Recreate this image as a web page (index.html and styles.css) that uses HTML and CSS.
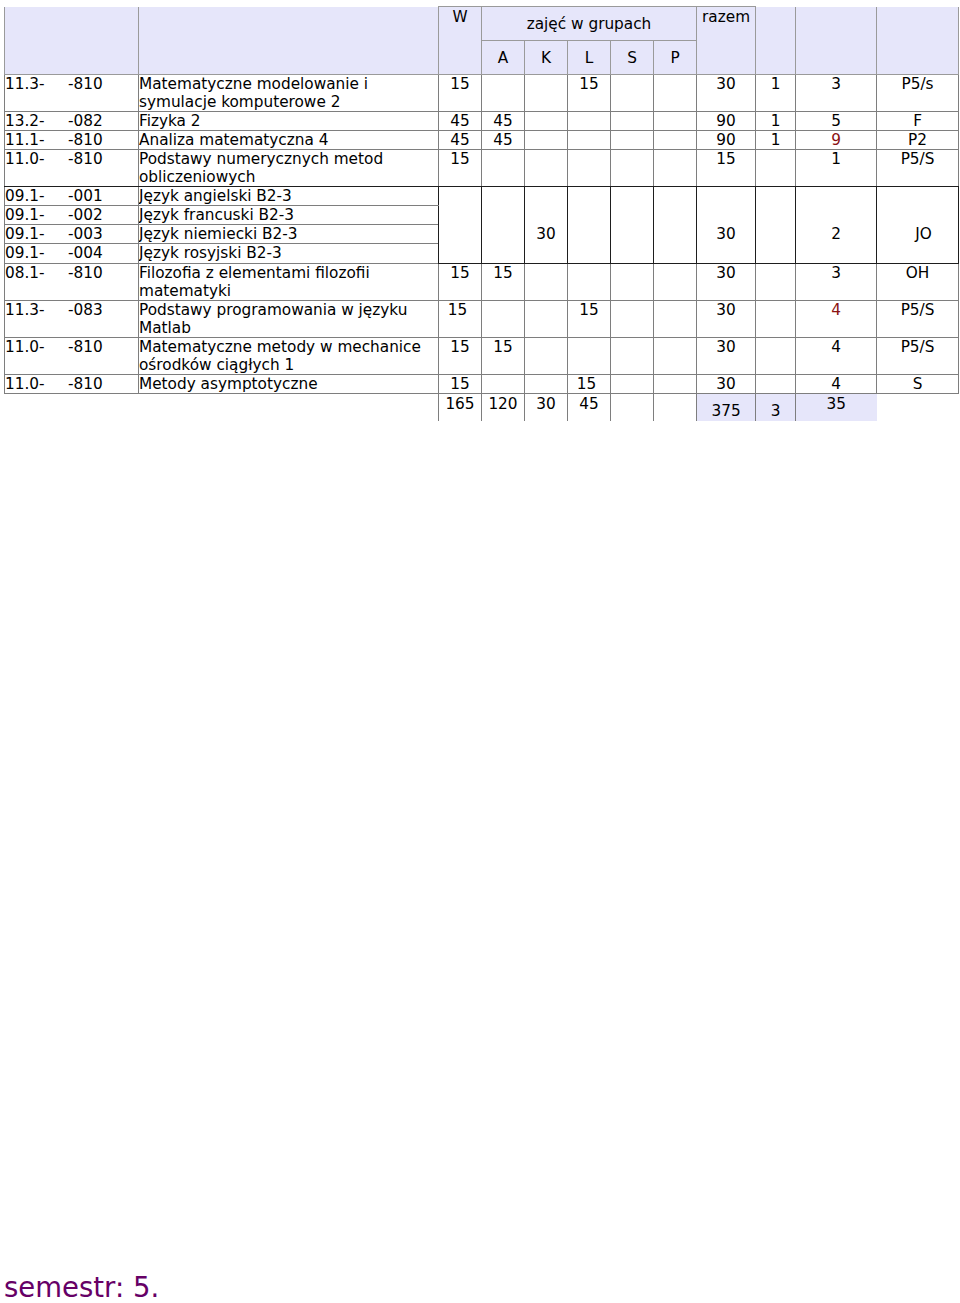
FILE: index.html
```html
<!DOCTYPE html>
<html lang="pl">
<head>
<meta charset="utf-8">
<title>semestr 5</title>
<link rel="stylesheet" href="styles.css">
</head>
<body>
<div class="page">
<table class="plan">
  <colgroup>
    <col class="c-code"><col class="c-name">
    <col class="c-n"><col class="c-n"><col class="c-n"><col class="c-n"><col class="c-n"><col class="c-n">
    <col class="c-raz"><col class="c-x1"><col class="c-x2"><col class="c-x3">
  </colgroup>
  <tr class="h1">
    <td class="hd" rowspan="2"></td>
    <td class="hd" rowspan="2"></td>
    <td class="hd top num" rowspan="2">W</td>
    <td class="hd top mid num" colspan="5">zajęć w grupach</td>
    <td class="hd top num" rowspan="2">razem</td>
    <td class="hd" rowspan="2"></td>
    <td class="hd" rowspan="2"></td>
    <td class="hd" rowspan="2"></td>
  </tr>
  <tr class="h2">
    <td class="hd mid num">A</td>
    <td class="hd mid num">K</td>
    <td class="hd mid num">L</td>
    <td class="hd mid num">S</td>
    <td class="hd mid num">P</td>
  </tr>
  <tr class="r2l">
    <td><span class="k1">11.3-</span>-810</td>
    <td>Matematyczne modelowanie i<br>symulacje komputerowe 2</td>
    <td class="num">15</td><td></td><td></td><td class="num">15</td><td></td><td></td>
    <td class="num">30</td><td class="num">1</td><td class="num">3</td><td class="num">P5/s</td>
  </tr>
  <tr class="r1l">
    <td><span class="k1">13.2-</span>-082</td>
    <td>Fizyka 2</td>
    <td class="num">45</td><td class="num">45</td><td></td><td></td><td></td><td></td>
    <td class="num">90</td><td class="num">1</td><td class="num">5</td><td class="num">F</td>
  </tr>
  <tr class="r1l">
    <td><span class="k1">11.1-</span>-810</td>
    <td>Analiza matematyczna 4</td>
    <td class="num">45</td><td class="num">45</td><td></td><td></td><td></td><td></td>
    <td class="num">90</td><td class="num">1</td><td class="num red">9</td><td class="num">P2</td>
  </tr>
  <tr class="r2l before-lang">
    <td><span class="k1">11.0-</span>-810</td>
    <td>Podstawy numerycznych metod<br>obliczeniowych</td>
    <td class="num">15</td><td></td><td></td><td></td><td></td><td></td>
    <td class="num">15</td><td></td><td class="num">1</td><td class="num">P5/S</td>
  </tr>
  <tr class="rl">
    <td><span class="k1">09.1-</span>-001</td>
    <td class="lname">Język angielski B2-3</td>
    <td class="lb" rowspan="4"></td>
    <td class="lb" rowspan="4"></td>
    <td class="lb num" rowspan="4">30</td>
    <td class="lb" rowspan="4"></td>
    <td class="lb" rowspan="4"></td>
    <td class="lb" rowspan="4"></td>
    <td class="lb num" rowspan="4">30</td>
    <td class="lb" rowspan="4"></td>
    <td class="lb num" rowspan="4">2</td>
    <td class="lb num jo" rowspan="4">JO</td>
  </tr>
  <tr class="rl">
    <td><span class="k1">09.1-</span>-002</td>
    <td class="lname">Język francuski B2-3</td>
  </tr>
  <tr class="rl">
    <td><span class="k1">09.1-</span>-003</td>
    <td class="lname">Język niemiecki B2-3</td>
  </tr>
  <tr class="rl rl-last">
    <td><span class="k1">09.1-</span>-004</td>
    <td class="lname">Język rosyjski B2-3</td>
  </tr>
  <tr class="r2l">
    <td><span class="k1">08.1-</span>-810</td>
    <td>Filozofia z elementami filozofii<br>matematyki</td>
    <td class="num">15</td><td class="num">15</td><td></td><td></td><td></td><td></td>
    <td class="num">30</td><td></td><td class="num">3</td><td class="num">OH</td>
  </tr>
  <tr class="r2l">
    <td><span class="k1">11.3-</span>-083</td>
    <td>Podstawy programowania w języku<br>Matlab</td>
    <td class="num sl">15</td><td></td><td></td><td class="num">15</td><td></td><td></td>
    <td class="num">30</td><td></td><td class="num red">4</td><td class="num">P5/S</td>
  </tr>
  <tr class="r2l">
    <td><span class="k1">11.0-</span>-810</td>
    <td>Matematyczne metody w mechanice<br>ośrodków ciągłych 1</td>
    <td class="num">15</td><td class="num">15</td><td></td><td></td><td></td><td></td>
    <td class="num">30</td><td></td><td class="num">4</td><td class="num">P5/S</td>
  </tr>
  <tr class="r1l">
    <td><span class="k1">11.0-</span>-810</td>
    <td>Metody asymptotyczne</td>
    <td class="num">15</td><td></td><td></td><td class="num sl">15</td><td></td><td></td>
    <td class="num">30</td><td></td><td class="num">4</td><td class="num">S</td>
  </tr>
  <tr class="tot">
    <td class="t-empty" colspan="2"></td>
    <td class="num">165</td><td class="num">120</td><td class="num">30</td><td class="num">45</td><td></td><td></td>
    <td class="num sum low">375</td><td class="num sum low">3</td><td class="num sum">35</td><td class="t-end"></td>
  </tr>
</table>
<div class="semestr">semestr: 5.</div>
</div>
</body>
</html>
```

FILE: styles.css
```css
html, body {
  margin: 0;
  padding: 0;
  background: #ffffff;
}

body {
  font-family: "DejaVu Sans", Verdana, sans-serif;
  font-size: 15.3px;
  color: #000000;
}

.page {
  padding: 6px 0 0 4px;
}

.plan {
  border-collapse: collapse;
  table-layout: fixed;
  width: 955px;
}

.c-code { width: 134px; }
.c-name { width: 300px; }
.c-n { width: 43px; }
.c-raz { width: 59px; }
.c-x1 { width: 40px; }
.c-x2 { width: 81px; }
.c-x3 { width: 82px; }

.plan td {
  border: 1px solid #7e7e7e;
  padding: 1px 0 0 0;
  line-height: 17.5px;
  vertical-align: top;
  text-align: left;
  white-space: nowrap;
  overflow: hidden;
}

.r1l td,
.rl td {
  line-height: 17px;
}

.k1 {
  display: inline-block;
  width: 63px;
}

.num {
  text-align: center !important;
}

.red {
  color: #8b1212;
}

.sl {
  padding-right: 5px !important;
}

/* header */
.h1 { height: 34px; }
.h2 { height: 34px; }

.plan .hd {
  background: #e6e6fa;
  border-top-style: none;
  border-color: #9a9a9a;
  padding-top: 0;
  line-height: 18px;
}

.plan .hd.top {
  border-top: 1px solid #9a9a9a;
  padding-top: 1px;
}

.plan .hd.mid {
  vertical-align: middle;
  padding-top: 0;
}

/* data rows */
.r2l { height: 37px; }
.r1l { height: 19px; }
.rl { height: 19px; }
.rl-last { height: 20px; }

.before-lang td {
  border-bottom-color: #1e1e1e;
}

.plan .lname {
  border-right-color: #1e1e1e;
}

.plan .lb {
  border-color: #1e1e1e;
  padding-top: 38px;
  line-height: 18px;
}

.plan .jo {
  padding-left: 12px;
}

/* totals */
.tot { height: 27px; }

.plan .tot td {
  border-bottom-style: none;
  line-height: 18px;
}

.plan .tot .t-empty {
  border-left-style: none;
  border-bottom-style: none;
}

.plan .tot .t-end {
  border-left: hidden;
  border-right-style: none;
}

.plan .sum {
  background: #e6e6fa;
}

.plan .tot .low {
  padding-top: 8px;
}

.semestr {
  margin-top: 851px;
  font-size: 27.5px;
  color: #660066;
  line-height: 31px;
}
```
